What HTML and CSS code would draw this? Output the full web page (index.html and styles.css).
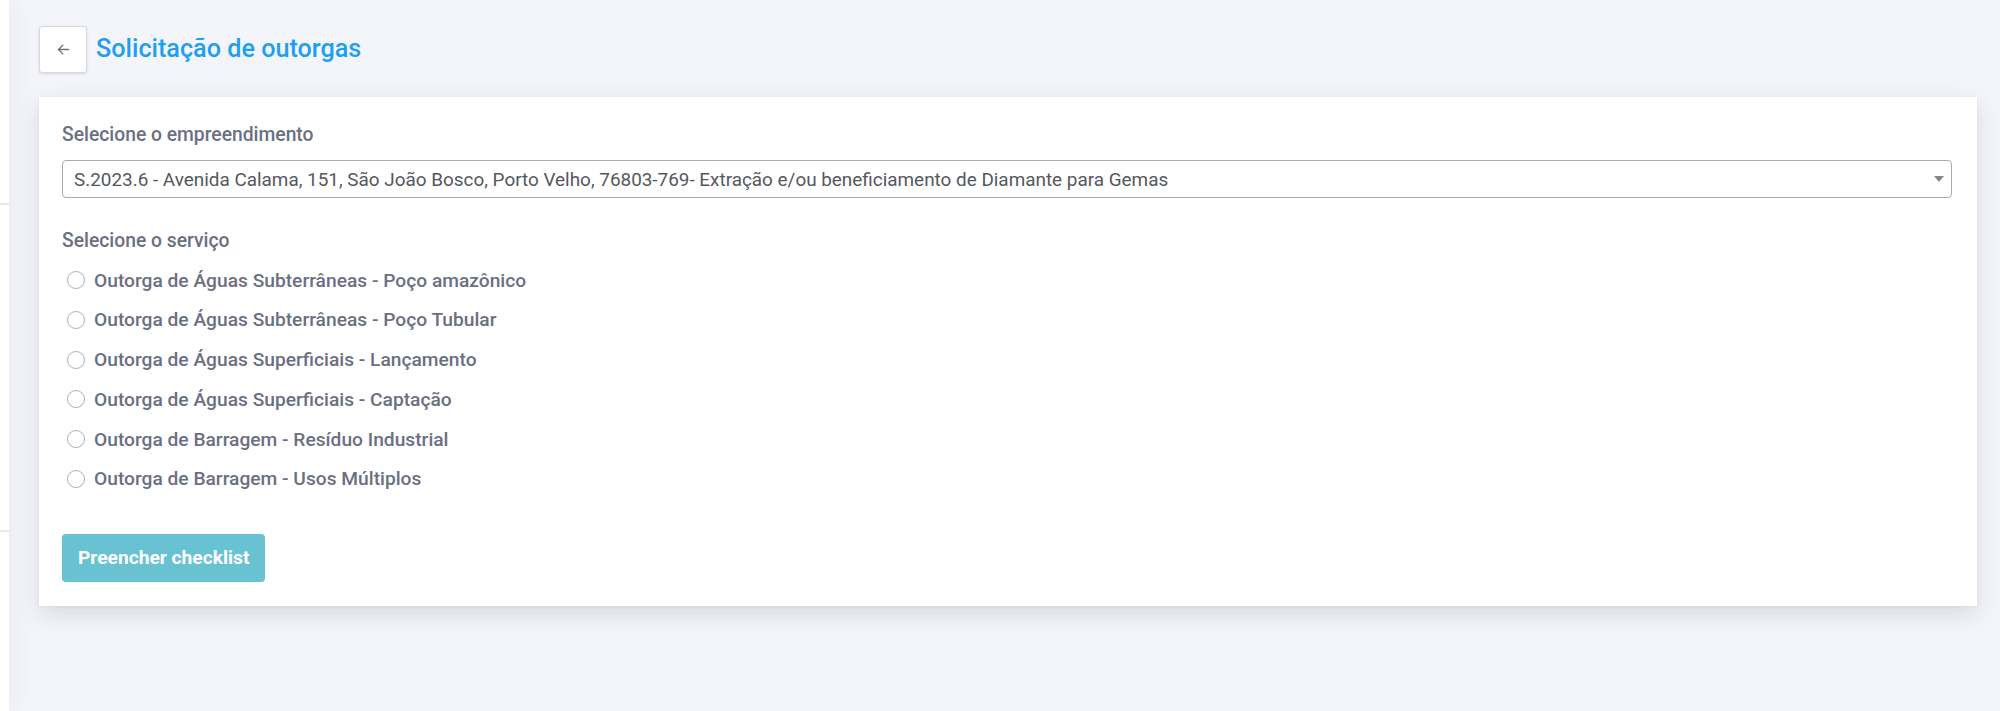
FILE: index.html
```html
<!DOCTYPE html>
<html lang="pt-BR">
<head>
<meta charset="utf-8">
<title>Solicitação de outorgas</title>
<link rel="stylesheet" href="styles.css">
</head>
<body>
<div class="layout">
  <aside class="sidebar">
    <div class="sidebar-block first"></div>
    <div class="sidebar-block second"></div>
  </aside>
  <main class="main">
    <header class="page-header">
      <button class="back-btn" type="button" aria-label="Voltar">
        <svg width="15" height="15" viewBox="0 0 24 24" fill="none" stroke="currentColor" stroke-width="2.2" stroke-linecap="round" stroke-linejoin="round"><line x1="20" y1="12" x2="4" y2="12"/><polyline points="11 19 4 12 11 5"/></svg>
      </button>
      <h1 class="page-title">Solicitação de outorgas</h1>
    </header>
    <section class="card">
      <label class="field-label">Selecione o empreendimento</label>
      <div class="select-box">
        <span class="select-text">S.2023.6 - Avenida Calama, 151, São João Bosco, Porto Velho, 76803-769- Extração e/ou beneficiamento de Diamante para Gemas</span>
        <span class="select-arrow"></span>
      </div>
      <label class="field-label second">Selecione o serviço</label>
      <div class="options">
        <label class="option"><span class="radio"></span>Outorga de Águas Subterrâneas - Poço amazônico</label>
        <label class="option"><span class="radio"></span>Outorga de Águas Subterrâneas - Poço Tubular</label>
        <label class="option"><span class="radio"></span>Outorga de Águas Superficiais - Lançamento</label>
        <label class="option"><span class="radio"></span>Outorga de Águas Superficiais - Captação</label>
        <label class="option"><span class="radio"></span>Outorga de Barragem - Resíduo Industrial</label>
        <label class="option"><span class="radio"></span>Outorga de Barragem - Usos Múltiplos</label>
      </div>
      <div class="actions">
        <button class="btn-checklist" type="button" disabled>Preencher checklist</button>
      </div>
    </section>
  </main>
</div>
</body>
</html>
```

FILE: styles.css
```css
* { box-sizing: border-box; }
html, body { margin: 0; padding: 0; }
body {
  background: #f4f5fa;
  font-family: Roboto, "Liberation Sans", Arial, sans-serif;
  height: 711px;
  overflow: hidden;
}
.layout {
  display: flex;
  min-height: 711px;
}
.sidebar {
  width: 9px;
  flex: 0 0 9px;
  background: #fff;
  box-shadow: 2px 0 22px rgba(40, 45, 80, 0.09);
  position: relative;
  z-index: 1;
}
.sidebar-block.first {
  height: 205px;
  border-bottom: 2px solid #e8e9ee;
}
.sidebar-block.second {
  height: 327px;
  border-bottom: 2px solid #e8e9ee;
}
.main {
  flex: 1;
  padding: 26px 23px 0 30px;
}
.page-header {
  display: flex;
  align-items: center;
  gap: 9px;
  height: 47px;
}
.back-btn {
  width: 48px;
  height: 47px;
  background: #fff;
  border: 1px solid #d9dae0;
  border-radius: 3px;
  box-shadow: 0 1px 3px rgba(0, 0, 0, 0.12);
  color: #6b6f82;
  display: flex;
  align-items: center;
  justify-content: center;
  padding: 0;
}
.page-title {
  margin: 0;
  font-size: 25.2px;
  font-weight: 500;
  color: #1e9ff2;
  line-height: 1.2;
}
.card {
  margin-top: 24px;
  background: #fff;
  padding: 24px 25px 24px 23px;
  box-shadow: 0 8px 22px rgba(40, 42, 70, 0.13), 0 1px 3px rgba(40, 42, 70, 0.06);
  display: flex;
  flex-direction: column;
}
.field-label {
  display: block;
  font-size: 19.3px;
  font-weight: 500;
  color: #6b6f82;
  line-height: 27px;
}
.field-label.second {
  margin-top: 29px;
}
.select-box {
  margin-top: 12px;
  height: 38px;
  border: 1px solid #aaa;
  border-radius: 4px;
  display: flex;
  align-items: center;
  padding: 0 7px 0 11px;
}
.select-text {
  flex: 1;
  font-size: 18.9px;
  color: #55585f;
  white-space: nowrap;
  overflow: hidden;
}
.select-arrow {
  width: 0;
  height: 0;
  border-style: solid;
  border-width: 6px 5px 0 5px;
  border-color: #888 transparent transparent transparent;
}
.options {
  margin-top: 12px;
  display: flex;
  flex-direction: column;
  gap: 11.8px;
}
.option {
  display: flex;
  align-items: center;
  height: 28px;
  font-size: 19.2px;
  font-weight: 500;
  color: #6b6f82;
}
.radio {
  width: 18px;
  height: 18px;
  border: 1px solid #b0b0b0;
  border-radius: 50%;
  background: #fff;
  margin: 0 9px 0 5px;
  flex: 0 0 18px;
}
.actions {
  margin-top: 41px;
}
.btn-checklist {
  height: 48px;
  padding: 0 16px;
  background: #68c2d1;
  border: 0;
  border-radius: 4px;
  color: #fff;
  font-family: Roboto, "Liberation Sans", Arial, sans-serif;
  font-size: 19.2px;
  font-weight: 700;
}
```
